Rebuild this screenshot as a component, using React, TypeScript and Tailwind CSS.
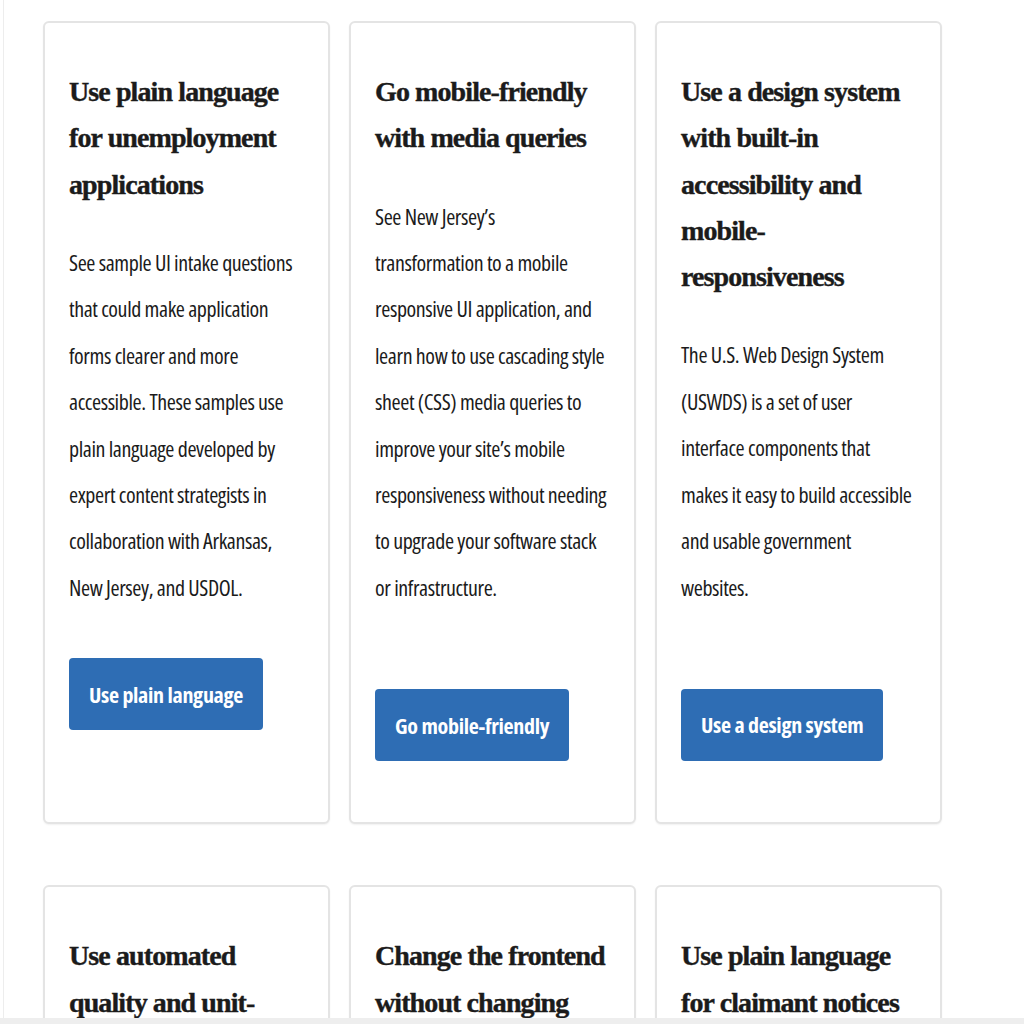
type Card = {
  title: string[];
  body: string[];
  button?: string;
  gap?: string;
};

const cards: Card[] = [
  {
    title: ["Use plain language", "for unemployment", "applications"],
    body: [
      "See sample UI intake questions",
      "that could make application",
      "forms clearer and more",
      "accessible. These samples use",
      "plain language developed by",
      "expert content strategists in",
      "collaboration with Arkansas,",
      "New Jersey, and USDOL.",
    ],
    button: "Use plain language",
    gap: "mt-[48px]",
  },
  {
    title: ["Go mobile-friendly", "with media queries"],
    body: [
      "See New Jersey’s",
      "transformation to a mobile",
      "responsive UI application, and",
      "learn how to use cascading style",
      "sheet (CSS) media queries to",
      "improve your site’s mobile",
      "responsiveness without needing",
      "to upgrade your software stack",
      "or infrastructure.",
    ],
    button: "Go mobile-friendly",
    gap: "mt-[79px]",
  },
  {
    title: ["Use a design system", "with built-in", "accessibility and", "mobile-", "responsiveness"],
    body: [
      "The U.S. Web Design System",
      "(USWDS) is a set of user",
      "interface components that",
      "makes it easy to build accessible",
      "and usable government",
      "websites.",
    ],
    button: "Use a design system",
    gap: "mt-[79px]",
  },
  { title: ["Use automated", "quality and unit-"], body: [] },
  { title: ["Change the frontend", "without changing"], body: [] },
  { title: ["Use plain language", "for claimant notices"], body: [] },
];

function CardItem({ card }: { card: Card }) {
  return (
    <div className="flex flex-col rounded-[6px] border-2 border-[#e4e4e4] bg-white px-[24px] pt-[46px] pb-[61px] shadow-[0_1px_2px_rgba(0,0,0,0.06)]">
      <h3 className="font-['Liberation_Serif',serif] text-[28px] font-bold leading-[46.3px] tracking-[-0.9px] text-[#1b1b1b] whitespace-nowrap [-webkit-text-stroke:0.4px_#1b1b1b]">
        {card.title.map((line, i) => (
          <span key={i} className="block">
            {line}
          </span>
        ))}
      </h3>
      {card.body.length > 0 && (
        <p className="mt-[31px] font-['Open_Sans',sans-serif] font-stretch-condensed text-[22px] leading-[46.4px] tracking-[-0.4px] text-[#1b1b1b] whitespace-nowrap">
          {card.body.map((line, i) => (
            <span key={i} className="block">
              {line}
            </span>
          ))}
        </p>
      )}
      {card.button && (
        <div className={card.gap}>
          <button className="h-[72px] rounded-[4px] bg-[#2e6db4] px-[20px] font-['Open_Sans',sans-serif] font-stretch-condensed text-[22px] font-bold tracking-[-0.3px] text-white">
            {card.button}
          </button>
        </div>
      )}
    </div>
  );
}

export default function App() {
  return (
    <div className="flex h-[1024px] flex-col overflow-hidden bg-white">
      <div className="ml-[3px] flex-1 overflow-hidden border-l border-[#ededed] pl-[39px] pt-[21px]">
        <div className="grid w-[899px] grid-cols-3 gap-x-[19px] gap-y-[61px]">
          {cards.map((card, i) => (
            <CardItem key={i} card={card} />
          ))}
        </div>
      </div>
      <div className="h-[6px] bg-[#eeeeee]" />
    </div>
  );
}
